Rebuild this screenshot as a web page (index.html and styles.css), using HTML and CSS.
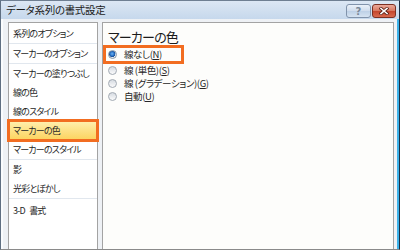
FILE: index.html
```html
<!DOCTYPE html>
<html lang="ja">
<head>
  <meta charset="UTF-8" />
  <title>データ系列の書式設定</title>
  <link rel="stylesheet" href="styles.css">
</head>
<body>
  <div class="window">
    <div class="titlebar">
      <span class="title">データ系列の書式設定</span>
      <div class="caption-buttons">
        <span class="cbtn help">?</span>
        <span class="cbtn close">
          <svg width="10" height="8" viewBox="0 0 10 8">
            <path d="M2 1.5 L8 6.5 M8 1.5 L2 6.5" stroke="#5a1f16" stroke-width="3.2" stroke-linecap="square"/>
            <path d="M2 1.5 L8 6.5 M8 1.5 L2 6.5" stroke="#fff" stroke-width="1.6" stroke-linecap="square"/>
          </svg>
        </span>
      </div>
    </div>

    <div class="content">
      <ul class="nav">
        <li>系列のオプション</li>
        <li class="sep"></li>
        <li>マーカーのオプション</li>
        <li class="sep"></li>
        <li>マーカーの塗りつぶし</li>
        <li>線の色</li>
        <li>線のスタイル</li>
        <li class="selected">マーカーの色</li>
        <li>マーカーのスタイル</li>
        <li class="sep"></li>
        <li>影</li>
        <li>光彩とぼかし</li>
        <li class="sep last"></li>
        <li>3-D 書式</li>
      </ul>

      <div class="panel">
        <h2>マーカーの色</h2>
        <div class="opt marked"><span class="radio on"></span>線なし(<u>N</u>)</div>
        <div class="opt"><span class="radio"></span>線 (単色)(<u>S</u>)</div>
        <div class="opt"><span class="radio"></span>線 (グラデーション)(<u>G</u>)</div>
        <div class="opt"><span class="radio"></span>自動(<u>U</u>)</div>
      </div>
    </div>
  </div>
</body>
</html>
```

FILE: styles.css
```css
body {
  margin: 0;
  font-family: "Noto Sans CJK JP", "Noto Sans", sans-serif;
  font-feature-settings: "palt" 1;
  color: #222;
  overflow: hidden;
}

.window {
  width: 400px;
  height: 250px;
  box-sizing: border-box;
  display: flex;
  flex-direction: column;
  border-left: 1px solid #5f6f82;
  border-top: 1px solid #6f7f92;
  border-right: 1px solid #1e2f44;
  border-bottom: 1px solid #8a8a8a;
  background: #eef1f5;
}

.titlebar {
  height: 18px;
  flex-shrink: 0;
  display: flex;
  align-items: flex-start;
  justify-content: space-between;
  padding: 0 3px 0 5px;
  background: linear-gradient(#dce7f4, #c6d8ec);
}

.title {
  font-size: 10.5px;
  line-height: 18px;
  letter-spacing: -0.3px;
  color: #1b1b1b;
}

.caption-buttons {
  display: flex;
  gap: 1px;
  margin-top: 3px;
}

.cbtn {
  height: 14px;
  box-sizing: border-box;
  border: 1px solid;
  border-radius: 3px;
  display: flex;
  align-items: center;
  justify-content: center;
}

.help {
  width: 25px;
  border-color: #8193ab;
  background: linear-gradient(#eaf1f9, #cfdcec 50%, #bdd0e6 51%, #d6e3f1);
  color: #7a8898;
  font: bold 10px "DejaVu Sans", sans-serif;
}

.close {
  width: 24px;
  border-color: #7c2f22;
  background: linear-gradient(#eba99b, #d7765f 50%, #c4452d 51%, #d8694e);
}

.content {
  flex: 1;
  display: flex;
  gap: 4px;
  padding: 3px 3px 0 7px;
  border-right: 2px solid #3cb2ea;
  box-shadow: inset 2px 0 #fafcfe;
  min-height: 0;
}

.nav {
  width: 88px;
  margin: 0;
  padding: 1px 0 0;
  list-style: none;
  border: 1px solid #a3a3a3;
  border-bottom: none;
  background: #fff;
}

.nav li {
  height: 19px;
  line-height: 19px;
  padding-left: 4px;
  font-size: 9px;
  letter-spacing: -0.8px;
  word-spacing: 3px;
  color: #262626;
  white-space: nowrap;
}

.nav .sep {
  height: 1px;
  padding: 0;
  background: #e1e7ee;
}

.nav .sep.last {
  margin-bottom: 2px;
}

.nav .selected {
  background: linear-gradient(#fff0b0, #fde38a 45%, #fcd35e);
  outline: 3px solid #f26d21;
  outline-offset: -1px;
}

.panel {
  flex: 1;
  border: 1px solid #a3a3a3;
  border-bottom: none;
  background: #fdfdfb;
  padding-top: 6px;
}

.panel h2 {
  margin: 0 0 0 5px;
  font-size: 13px;
  line-height: 16px;
  letter-spacing: -0.8px;
  font-weight: normal;
  color: #1b1b1b;
}

.opt {
  height: 13px;
  line-height: 13px;
  display: flex;
  align-items: center;
  padding-left: 5px;
  font-size: 9.5px;
  letter-spacing: -0.4px;
  color: #262626;
  white-space: nowrap;
}

.opt.marked {
  width: 81px;
  height: 19px;
  box-sizing: border-box;
  border: 3px solid #f26d21;
  padding-left: 2px;
}

.radio {
  width: 9px;
  height: 9px;
  box-sizing: border-box;
  border-radius: 50%;
  border: 1px solid #a2aab3;
  background: linear-gradient(#d6dbe1, #fbfbfb);
  margin-right: 7px;
  flex-shrink: 0;
}

.radio.on {
  border-color: #8797a8;
  background: radial-gradient(circle at 45% 40%, #6fb3f2 0, #2a73c8 2px, #1a4f96 3px, #e4eaf1 3.5px);
}
```
